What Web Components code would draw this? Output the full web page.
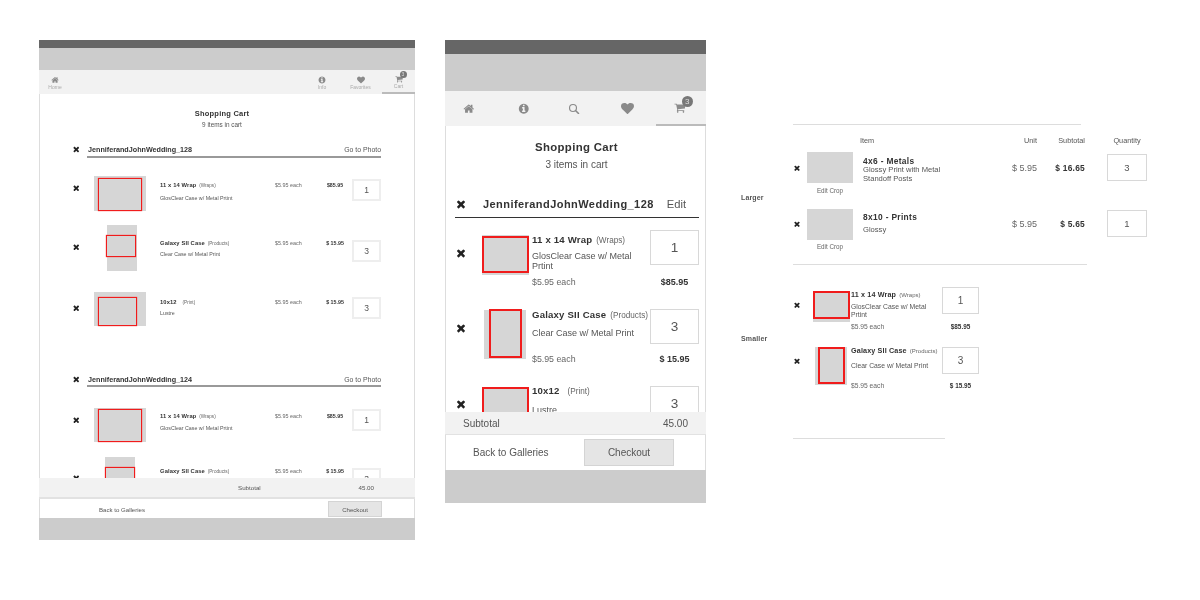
<!DOCTYPE html>
<html lang="en"><head><meta charset="utf-8"><title>Shopping Cart wireframes</title>
<style>
html,body{margin:0;background:#fff}
body{width:1200px;height:600px;overflow:hidden;display:flex;align-items:flex-start;padding:40px 0 0 39px;box-sizing:border-box;font-family:"Liberation Sans",Arial,sans-serif;color:#333}
#small{--f:.35px;margin-right:30px}
#big{--f:.2px;margin-right:35px}
</style></head><body>

<wire-phone id="small" style="--dark:8px;--banner:22px;--foot:19px;--banner2:22px;--w:376px;--h:500px">
  <cart-nav slot="nav" style="--nh:24px;--is:8px;--ls:5px;--bd:7px;--bf:5px;--bx:5px;--by:-3.5px;--it:2px">
    <nav-tab icon="home" label="Home" style="--tw:32px"></nav-tab>
    <span style="flex:1"></span>
    <nav-tab icon="info" label="Info" style="--tw:34px"></nav-tab>
    <nav-tab icon="heart" label="Favorites" style="--tw:43px"></nav-tab>
    <nav-tab icon="cart" label="Cart" badge="3" active style="--tw:33px"></nav-tab>
  </cart-nav>
  <div style="padding:15px 0 0 30px;--tf:7.5px;--sf:6.4px;--hf:7.2px;--hl:6.9px;--hs:0em">
    <cart-title heading="Shopping Cart" note="9 items in cart" style="--tl:10px;--sl:9px;--gap:1px;--wd:304px"></cart-title>
    <group-head name="JenniferandJohnWedding_128" action="Go to Photo" style="--top:14px;--x:12px;--xs:8.5px;--col:18px;--rl:17px;--rh:2px;--rc:#999;--gp:0px;--pr:0px;--w:311px"></group-head>
    <cart-line layout="wide" style="--mt:18px;--rh:49px;--xc:12px;--qt:3px;--nc:9px;--dc:22px"
      name="11 x 14 Wrap" kind="(Wraps)" desc="GlosClear Case w/ Metal Prtint" price="$5.95 each" sub="$85.95" qty="1" thumb="0,0,52,35,4,2,44,33"></cart-line>
    <cart-line layout="wide" style="--rh:67px;--xc:22px;--qt:15px;--nc:18px;--dc:29px"
      name="Galaxy SII Case" kind="(Products)" desc="Clear Case w/ Metal Print" price="$5.95 each" sub="$ 15.95" qty="3" thumb="13,0,30,46,12,10,30,22"></cart-line>
    <cart-line layout="wide" style="--rh:81px;--xc:16px;--qt:5px;--nc:10px;--dc:21px"
      name="10x12" kind="(Print)" gap="4" desc="Lustre" price="$5.95 each" sub="$ 15.95" qty="3" thumb="0,0,52,34,4,5,39,29"></cart-line>
    <group-head name="JenniferandJohnWedding_124" action="Go to Photo" style="--top:0px;--x:12px;--xs:8.5px;--col:18px;--rl:17px;--rh:2px;--rc:#999;--gp:-1px;--pr:0px;--w:311px"></group-head>
    <cart-line layout="wide" style="--mt:21px;--rh:49px;--xc:12px;--qt:1px;--nc:8px;--dc:20px"
      name="11 x 14 Wrap" kind="(Wraps)" desc="GlosClear Case w/ Metal Prtint" price="$5.95 each" sub="$85.95" qty="1" thumb="0,0,52,34,4,1,44,33"></cart-line>
    <cart-line layout="wide" style="--rh:67px;--xc:21px;--qt:11px;--nc:14px;--dc:25px"
      name="Galaxy SII Case" kind="(Products)" desc="Clear Case w/ Metal Print" price="$5.95 each" sub="$ 15.95" qty="3" thumb="11,0,30,46,11,10,30,22"></cart-line>
  </div>
  <cart-summary slot="summary" value="45.00" style="--sh:19px;--sb:2px;--pl:199px;--pr:41px;--fs:6.2px"></cart-summary>
  <cart-actions slot="foot" style="--pl:59px;--fs:6.1px;--bw:54px;--bh:16px;--mr:32px;padding-top:1px"></cart-actions>
</wire-phone>

<wire-phone id="big" style="--dark:14px;--banner:37px;--foot:35px;--banner2:33px;--w:261px;--h:463px">
  <cart-nav slot="nav" style="--nh:35px;--is:11.5px;--ls:0px;--bd:11px;--bf:8px;--bx:8px;--by:-5.5px;--it:0px">
    <nav-tab icon="home" style="--tw:48px"></nav-tab>
    <nav-tab icon="info" style="--tw:61px"></nav-tab>
    <nav-tab icon="search" style="--tw:40px"></nav-tab>
    <nav-tab icon="heart" style="--tw:62px;--is:13px;padding-left:4px"></nav-tab>
    <nav-tab icon="cart" badge="3" active style="--tw:50px;padding-right:3px"></nav-tab>
  </cart-nav>
  <div style="padding:14px 0 0 9px;--tf:11.4px;--sf:10px;--hf:11px;--hl:11.2px;--hs:.04em">
    <cart-title heading="Shopping Cart" note="3 items in cart" style="--tl:14px;--sl:12px;--gap:5px;--wd:243px"></cart-title>
    <group-head name="JenniferandJohnWedding_128" action="Edit" style="--top:26px;--x:12px;--xs:14px;--col:28px;--rl:0px;--rh:1px;--rc:#333;--gp:7px;--pr:13px;--w:244px"></group-head>
    <cart-line layout="stacked" style="--mt:12px;--rh:79px;--xc:23px;--qt:0px;--nc:10px;--dc:26px;--pc:52px"
      name="11 x 14 Wrap" kind="(Wraps)" desc="GlosClear Case w/ Metal
Prtint" price="$5.95 each" sub="$85.95" qty="1" thumb="0,5,47,40,0,6,47,37"></cart-line>
    <cart-line layout="stacked" style="--rh:77px;--xc:19px;--qt:0px;--nc:6px;--dc:24px;--pc:50px"
      name="Galaxy SII Case" kind="(Products)" desc="Clear Case w/ Metal Print" price="$5.95 each" sub="$ 15.95" qty="3" thumb="2,1,42,49,7,0,33,49"></cart-line>
    <cart-line layout="stacked" style="--rh:80px;--xc:18px;--qt:0px;--nc:5px;--dc:24px;--pc:50px"
      name="10x12" kind="(Print)" gap="5" desc="Lustre" price="" sub="" qty="3" thumb="0,1,47,38,0,1,47,38"></cart-line>
  </div>
  <cart-summary slot="summary" value="45.00" style="--sh:22px;--sb:1px;--pl:18px;--pr:18px;--fs:10px"></cart-summary>
  <cart-actions slot="foot" style="--pl:27px;--fs:10px;--bw:90px;--bh:27px;--mr:31px"></cart-actions>
</wire-phone>

<spec-board>
  <spec-section label="Larger" style="--bw:288px;--sh:140px;--lt:69px">
    <spec-header></spec-header>
    <cart-line layout="large" style="--rh:57px;--xc:16px;--qt:2px;--nc:9px;--dc:17px;--pc:16px;--ec:39px"
      name="4x6 - Metals" desc="Glossy Print with Metal
Standoff Posts" unit="$ 5.95" sub="$ 16.65" qty="3" edit thumb="0,0,46,31,0,0,0,0"></cart-line>
    <cart-line layout="large" style="--rh:55px;--xc:15px;--qt:1px;--nc:8px;--dc:20px;--pc:15px;--ec:38px"
      name="8x10 - Prints" desc="Glossy" unit="$ 5.95" sub="$ 5.65" qty="1" edit thumb="0,0,46,31,0,0,0,0"></cart-line>
  </spec-section>
  <spec-section label="Smaller" style="--bw:294px;--sh:174px;--lt:70px">
    <cart-line layout="small" style="--mt:22px;--rh:60px;--xc:18px;--qt:0px;--nc:8px;--dc:20px;--pc:40px"
      name="11 x 14 Wrap" kind="(Wraps)" desc="GlosClear Case w/ Metal
Prtint" price="$5.95 each" sub="$85.95" qty="1" thumb="0,4,37,31,0,4,37,28"></cart-line>
    <cart-line layout="small" style="--rh:60px;--xc:14px;--qt:0px;--nc:4px;--dc:19px;--pc:39px"
      name="Galaxy SII Case" kind="(Products)" desc="Clear Case w/ Metal Print" price="$5.95 each" sub="$ 15.95" qty="3" thumb="2,0,32,38,5,0,27,37"></cart-line>
  </spec-section>
  <spec-section style="--bw:152px;--sh:1px;--lt:0px"></spec-section>
</spec-board>

<script>
const ICONS={
 times:"M1490 1322q0 40-28 68l-136 136q-28 28-68 28t-68-28l-294-294-294 294q-28 28-68 28t-68-28l-136-136q-28-28-28-68t28-68l294-294-294-294q-28-28-28-68t28-68l136-136q28-28 68-28t68 28l294 294 294-294q28-28 68-28t68 28l136 136q28 28 28 68t-28 68l-294 294 294 294q28 28 28 68z",
 heart:"M896 1664q-26 0-44-18l-624-602q-10-8-27.5-26t-55.5-65.5-68-97.5-53.5-121-23.5-138q0-220 127-344t351-124q62 0 126.5 21.5t120 58 95.5 68.5 76 68q36-36 76-68t95.5-68.5 120-58 126.5-21.5q224 0 351 124t127 344q0 221-229 450l-623 600q-18 18-44 18z",
 home:"M1472 992v480q0 26-19 45t-45 19h-384v-384h-256v384h-384q-26 0-45-19t-19-45v-480q0-1 .5-3t.5-3l575-474 575 474q1 2 1 6zm223-69l-62 74q-8 9-21 11h-3q-13 0-21-7l-692-577-692 577q-12 8-24 7-13-2-21-11l-62-74q-8-10-7-23.5t11-21.5l719-599q32-26 76-26t76 26l244 204v-195q0-14 9-23t23-9h192q14 0 23 9t9 23v408l219 182q10 8 11 21.5t-7 23.5z",
 info:"M1152 1376v-160q0-14-9-23t-23-9h-96v-512q0-14-9-23t-23-9h-320q-14 0-23 9t-9 23v160q0 14 9 23t23 9h96v320h-96q-14 0-23 9t-9 23v160q0 14 9 23t23 9h448q14 0 23-9t9-23zm-128-896v-160q0-14-9-23t-23-9h-192q-14 0-23 9t-9 23v160q0 14 9 23t23 9h192q14 0 23-9t9-23zm640 416q0 209-103 385.5t-279.5 279.5-385.5 103-385.5-103-279.5-279.5-103-385.5 103-385.5 279.5-279.5 385.5-103 385.5 103 279.5 279.5 103 385.5z",
 cart:"M704 1536q0 52-38 90t-90 38-90-38-38-90 38-90 90-38 90 38 38 90zm896 0q0 52-38 90t-90 38-90-38-38-90 38-90 90-38 90 38 38 90zm128-1088v512q0 24-16.5 42.5t-40.5 21.5l-1044 122q13 60 13 70 0 16-24 64h920q26 0 45 19t19 45-19 45-45 19h-1024q-26 0-45-19t-19-45q0-11 8-31.5t16-36 21.5-40 15.5-29.5l-177-823h-204q-26 0-45-19t-19-45 19-45 45-19h256q16 0 28.5 6.5t19.5 15.5 13 24.5 8 26 5.5 29.5 4.5 26h1201q26 0 45 19t19 45z"
};
const svg=(n,s,c)=>{
  const body=n==="search"
    ? `<circle cx="780" cy="780" r="540" fill="none" stroke="${c}" stroke-width="180"/><path d="M1170 1170L1640 1640" stroke="${c}" stroke-width="230" stroke-linecap="round"/>`
    : `<path fill="${c}" d="${ICONS[n]}"/>`;
  return `<svg viewBox="0 0 1792 1792" style="width:${s};height:${s};display:block">${body}</svg>`;
};
function def(name,render){
  customElements.define(name,class extends HTMLElement{
    connectedCallback(){ if(this.shadowRoot) return; this.attachShadow({mode:"open"}).innerHTML=render(this); }
  });
}
const a=(e,n)=>e.getAttribute(n)||"";
def("wire-phone",()=>`<style>
:host{display:flex;flex:none;flex-direction:column;width:var(--w);height:var(--h);filter:blur(var(--f))}
.dark{height:var(--dark);background:#666;flex:none}
.banner{height:var(--banner);background:#ccc;flex:none}
.body{flex:1;min-height:0;overflow:hidden;background:#fff;border-left:1px solid #ddd;border-right:1px solid #ddd}
.foot{height:var(--foot);flex:none;display:flex;border-left:1px solid #ddd;border-right:1px solid #ddd;background:#fff}
.b2{height:var(--banner2);background:#ccc;flex:none}
</style><div class="dark"></div><div class="banner"></div><slot name="nav"></slot><div class="body"><slot></slot></div><slot name="summary"></slot><div class="foot"><slot name="foot"></slot></div><div class="b2"></div>`);
def("cart-nav",()=>`<style>:host{display:flex;height:var(--nh);background:#f2f2f2;flex:none}</style><slot></slot>`);
def("nav-tab",e=>`<style>
:host{display:flex;flex-direction:column;align-items:center;justify-content:center;box-sizing:border-box;flex:none;width:var(--tw);position:relative;color:#aaa;font-size:var(--ls);line-height:7px;padding-top:var(--it)}
:host([active]){border-bottom:2px solid #bbb}
.ic{position:relative}
.bd{position:absolute;left:var(--bx);top:var(--by);width:var(--bd);height:var(--bd);border-radius:50%;background:#777;color:#ddd;font-size:var(--bf);line-height:var(--bd);text-align:center}
.lb:empty{display:none}
</style><div class="ic">${svg(a(e,"icon"),"var(--is)","#8a8a8a")}${a(e,"badge")?`<span class="bd">${a(e,"badge")}</span>`:""}</div><div class="lb">${a(e,"label")}</div>`);
def("cart-title",e=>`<style>
:host{display:block;width:var(--wd);text-align:center}
.t{font-size:var(--tf);line-height:var(--tl);font-weight:700;letter-spacing:.03em;color:#333}
.s{font-size:var(--sf);line-height:var(--sl);margin-top:var(--gap);color:#555}
</style><div class="t">${a(e,"heading")}</div><div class="s">${a(e,"note")}</div>`);
def("group-head",e=>`<style>
:host{display:block;margin-top:var(--top);width:var(--w)}
.row{display:flex;align-items:center;height:13px;padding-right:var(--pr)}
.x{width:var(--x);flex:none;display:flex;justify-content:center}
.n{margin-left:calc(var(--col) - var(--x));font-size:var(--hf);font-weight:700;letter-spacing:var(--hs);color:#333;white-space:nowrap}
.a{margin-left:auto;font-size:var(--hl);color:#555;white-space:nowrap}
.r{height:var(--rh);background:var(--rc);margin:var(--gp) 0 0 var(--rl)}
</style><div class="row"><div class="x">${svg("times","var(--xs)","#222")}</div><div class="n">${a(e,"name")}</div><div class="a">${a(e,"action")}</div></div><div class="r"></div>`);
def("crop-thumb",e=>{
 const [gx,gy,gw,gh,rx,ry,rw,rh]=a(e,"box").split(",").map(Number);
 return `<style>:host{display:block;position:relative}
 .g{background:#d6d6d6;margin-left:${gx}px;margin-top:${gy}px;width:${gw}px;height:${gh}px}
 .r{position:absolute;box-sizing:border-box;left:${rx}px;top:${ry}px;width:${rw}px;height:${rh}px;border:var(--rb,1px) solid #f01c1c;box-shadow:var(--rs,none)}
 </style><div class="g"></div>${rw?'<div class="r"></div>':''}`;
});
def("qty-box",e=>`<style>:host{display:flex;box-sizing:border-box;align-items:center;justify-content:center;width:var(--qw);height:var(--qh);border:var(--qb,1px) solid var(--qc,#d8d8d8);background:#fff;color:#555;font-size:var(--qf)}</style>${a(e,"value")}`);
def("cart-line",e=>{
 const edit=e.hasAttribute("edit"), kind=a(e,"kind"), price=a(e,"price"), sub=a(e,"sub"), unit=a(e,"unit");
 return `<style>
:host{display:grid;align-items:start;height:var(--rh);margin-top:var(--mt,0);color:#333}
.c{grid-row:1;min-width:0;white-space:nowrap}
.x{grid-column:1;width:var(--xw);display:flex;justify-content:center;margin-top:var(--xc);transform:translateY(-50%)}
.th{grid-column:2}
.n,.d,.p{grid-column:3}
.n{margin-top:calc(var(--nc) - 5px);line-height:10px;font-size:var(--nf);font-weight:700;letter-spacing:var(--ns,.02em)}
.n small{font-size:var(--kf);font-weight:400;color:#666;letter-spacing:0;margin-left:${a(e,"gap")||1}px}
.d{margin-top:calc(var(--dc) - var(--dl)/2);line-height:var(--dl);font-size:var(--df);color:#555;white-space:pre-line}
.p{margin-top:calc(var(--pc,0px) - 5px);line-height:10px;font-size:var(--pf);color:#666}
.sb{font-weight:700;line-height:10px;font-size:var(--bf);text-align:center;color:#333}
.q{justify-self:end}
.ed{grid-column:2;width:46px;text-align:center;font-size:6.3px;line-height:8px;color:#666;margin-top:calc(var(--ec) - 4px)}
:host([layout=wide]){grid-template-columns:24px 66px 115px 43px 34px 29px;--xw:12px;--xs:8.5px;--nf:5.8px;--kf:4.7px;--dl:8px;--df:5.3px;--pf:5.4px;--bf:5.3px;--qw:29px;--qh:22px;--qf:8.5px;--qb:2px;--qc:#eee;--rs:0 0 1px #f33}
:host([layout=wide]) .p{grid-column:4;margin-top:calc(var(--nc) - 5px)}
:host([layout=wide]) .sb{grid-column:5;margin-top:calc(var(--nc) - 5px)}
:host([layout=wide]) .q{grid-column:6;margin-top:var(--qt)}
:host([layout=stacked]){grid-template-columns:27px 50px 118px 49px;--xw:12px;--xs:14px;--nf:9.6px;--kf:8.2px;--dl:10.5px;--df:9px;--pf:8.8px;--bf:9px;--qw:49px;--qh:35px;--qf:13.5px;--rb:2px}
:host([layout=stacked]) .sb,:host([layout=stacked]) .q{grid-column:4}
:host([layout=stacked]) .sb{margin-top:calc(var(--pc) - 5px)}
:host([layout=stacked]) .q{margin-top:var(--qt)}
:host([layout=small]){grid-template-columns:20px 38px 91px 37px;--xw:8px;--xs:10.5px;--nf:7.2px;--kf:6px;--dl:7.5px;--df:6.8px;--pf:6.7px;--bf:6.4px;--qw:37px;--qh:27px;--qf:10px;--rb:2px}
:host([layout=small]) .sb,:host([layout=small]) .q{grid-column:4}
:host([layout=small]) .sb{margin-top:calc(var(--pc) - 5px)}
:host([layout=small]) .q{margin-top:var(--qt)}
:host([layout=large]){grid-template-columns:14px 56px 144px 30px 48px 22px 40px;--xw:8px;--xs:10.5px;--nf:8.4px;--kf:6px;--dl:9px;--df:7.6px;--pf:9px;--bf:8.4px;--qw:40px;--qh:27px;--qf:9.5px}
:host([layout=large]) .n{--ns:.04em}
:host([layout=large]) .p{grid-column:3 / 5;text-align:right;margin-top:calc(var(--pc) - 5px);color:#666}
:host([layout=large]) .sb{grid-column:5;text-align:right;margin-top:calc(var(--pc) - 5px);letter-spacing:.03em}
:host([layout=large]) .q{grid-column:7;margin-top:var(--qt)}
</style>
<div class="c x">${svg("times","var(--xs)","#222")}</div>
<crop-thumb class="c th" box="${a(e,"thumb")}"></crop-thumb>
<div class="c n">${a(e,"name")}${kind?` <small>${kind}</small>`:""}</div>
<div class="c d">${a(e,"desc")}</div>
${price?`<div class="c p">${price}</div>`:""}${unit?`<div class="c p">${unit}</div>`:""}
${sub?`<div class="c sb">${sub}</div>`:""}
<qty-box class="c q" value="${a(e,"qty")}"></qty-box>
${edit?`<div class="c ed">Edit Crop</div>`:""}`;
});
def("cart-summary",e=>`<style>
:host{display:flex;box-sizing:border-box;align-items:center;flex:none;height:calc(var(--sh) + var(--sb));background:#f2f2f2;border-bottom:var(--sb) solid #e2e2e2;padding:0 var(--pr) 0 var(--pl);font-size:var(--fs);color:#555;justify-content:space-between}
</style><span>Subtotal</span><span>${a(e,"value")}</span>`);
def("cart-actions",()=>`<style>
:host{display:flex;flex:1;align-items:center;padding-left:var(--pl);font-size:var(--fs);color:#555;box-sizing:border-box}
.c{margin-left:auto;margin-right:var(--mr);width:var(--bw);height:var(--bh);box-sizing:border-box;background:#e5e5e5;border:1px solid #d4d4d4;display:flex;align-items:center;justify-content:center}
</style><span>Back to Galleries</span><span class="c">Checkout</span>`);
def("spec-board",()=>`<style>:host{display:block;flex:none;width:406px;padding-top:84px;filter:blur(.25px)}</style><slot></slot>`);
def("spec-section",e=>`<style>
:host{display:grid;grid-template-columns:52px 1fr;height:var(--sh)}
.l{font-size:7px;font-weight:700;color:#555;margin-top:var(--lt);line-height:10px;letter-spacing:.02em}
.b{width:var(--bw);height:1px;background:#ddd}
</style><div class="l">${a(e,"label")}</div><div><div class="b"></div><slot></slot></div>`);
def("spec-header",()=>`<style>
:host{display:grid;grid-template-columns:14px 56px 144px 30px 48px 22px 40px;height:27px;align-items:start;font-size:7.3px;color:#555;line-height:8px;padding-top:12px;box-sizing:border-box}
.i{grid-column:3;margin-left:-3px}.u{grid-column:4;text-align:right}.s{grid-column:5;text-align:right}.q{grid-column:7;text-align:center}
</style><span class="i">Item</span><span class="u">Unit</span><span class="s">Subtotal</span><span class="q">Quantity</span>`);
</script>
</body></html>
